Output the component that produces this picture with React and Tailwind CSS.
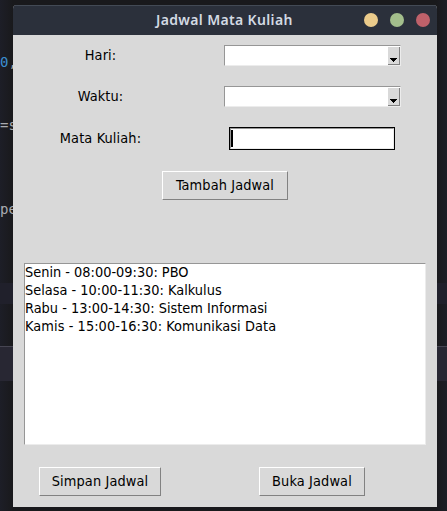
import React from 'react';

const entries = [
  'Senin - 08:00-09:30: PBO',
  'Selasa - 10:00-11:30: Kalkulus',
  'Rabu - 13:00-14:30: Sistem Informasi',
  'Kamis - 15:00-16:30: Komunikasi Data',
];

function Label({ children }) {
  return <div className="h-[18px] w-[175px] text-center leading-[16px] tracking-[0.12px]">{children}</div>;
}

function Combo() {
  return (
    <div className="ml-9 flex h-[21px] w-[177px] justify-end border border-t-[#969696] border-l-[#969696] border-r-[#ececec] border-b-[#ececec] bg-white pt-px">
      <div className="flex h-[18px] w-3 items-end justify-center border-r border-b border-[#828282] bg-[#d9d9d9] pb-[2px]">
        <svg width="7" height="4" viewBox="0 0 7 4" shapeRendering="crispEdges">
          <path d="M0 0h7v1H6v1H5v1H4v1H3V3H2V2H1V1H0z" fill="#000" />
        </svg>
      </div>
    </div>
  );
}

function Button({ className, children }) {
  return (
    <button
      className={
        'h-[29px] border border-t-white border-l-white border-r-[#828282] border-b-[#828282] text-center leading-[27px] tracking-[0.12px] whitespace-nowrap ' +
        className
      }
    >
      {children}
    </button>
  );
}

function Editor() {
  return (
    <div className="flex h-full flex-col bg-[linear-gradient(90deg,#1d1e27_0px,#19191c_13px,#19191c_436px,#1d1e26_447px)] font-['DejaVu_Sans_Mono',monospace] text-[14px] leading-[18px] whitespace-pre text-[#a9abb0]">
      <div className="mt-[53px] h-[18px]">
        <span className="text-[#3b8ed0]">0</span>,
      </div>
      <div className="mt-[45px] h-[18px]">=s</div>
      <div className="mt-[66px] h-[18px]">pe</div>
      <div className="mt-[65px] h-[21px] bg-[#20202b]" />
      <div className="mt-[42px] h-[35px] border-t border-[#464552] bg-[#282733]" />
    </div>
  );
}

export default function App() {
  return (
    <div className="relative h-[511px] w-[447px] overflow-hidden">
      <Editor />
      <div className="absolute top-[5px] left-[13px] flex h-[502px] w-[424px] flex-col overflow-hidden rounded-t-[4px] bg-[#d9d9d9] font-['DejaVu_Sans_Condensed','DejaVu_Sans',sans-serif] text-[14.4px] text-black">
        <header className="flex h-[30px] shrink-0 items-center border-t border-[#434a55] bg-[#2b303b]">
          <div className="-mt-[2px] ml-[143px] w-[208px] font-['Noto_Sans',sans-serif] text-[14px] leading-[20px] font-semibold tracking-[0.35px] whitespace-nowrap text-[#d3dae3]">
            Jadwal Mata Kuliah
          </div>
          <div className="-mt-px flex gap-3">
            <span className="size-[14px] rounded-full bg-[#ebcb8b]" />
            <span className="size-[14px] rounded-full bg-[#a3be8c]" />
            <span className="size-[14px] rounded-full bg-[#bf616a]" />
          </div>
        </header>
        <div className="mt-[10px] flex h-[21px] items-center">
          <Label>Hari:</Label>
          <Combo />
        </div>
        <div className="mt-5 flex h-[21px] items-center">
          <Label>Waktu:</Label>
          <Combo />
        </div>
        <div className="mt-5 flex h-[23px] items-center">
          <Label>Mata Kuliah:</Label>
          <div className="ml-[41px] h-[23px] w-[166px] border border-black">
            <div className="h-[21px] border border-t-[#969696] border-l-[#969696] border-r-[#ececec] border-b-[#ececec] bg-white pt-px">
              <div className="h-[17px] w-[2px] bg-black" />
            </div>
          </div>
        </div>
        <Button className="mt-[21px] ml-[149px] w-[126px]">Tambah Jadwal</Button>
        <ul className="mt-[63px] ml-[11px] h-[182px] w-[402px] shrink-0 border border-t-[#969696] border-l-[#969696] border-r-[#ececec] border-b-[#ececec] bg-white">
          {entries.map((entry) => (
            <li key={entry} className="h-[18px] leading-[16px] whitespace-nowrap last:tracking-[0.07px]">
              {entry}
            </li>
          ))}
        </ul>
        <div className="mt-[22px] ml-[26px] flex gap-[98px]">
          <Button className="w-[122px]">Simpan Jadwal</Button>
          <Button className="w-[106px]">Buka Jadwal</Button>
        </div>
      </div>
    </div>
  );
}
